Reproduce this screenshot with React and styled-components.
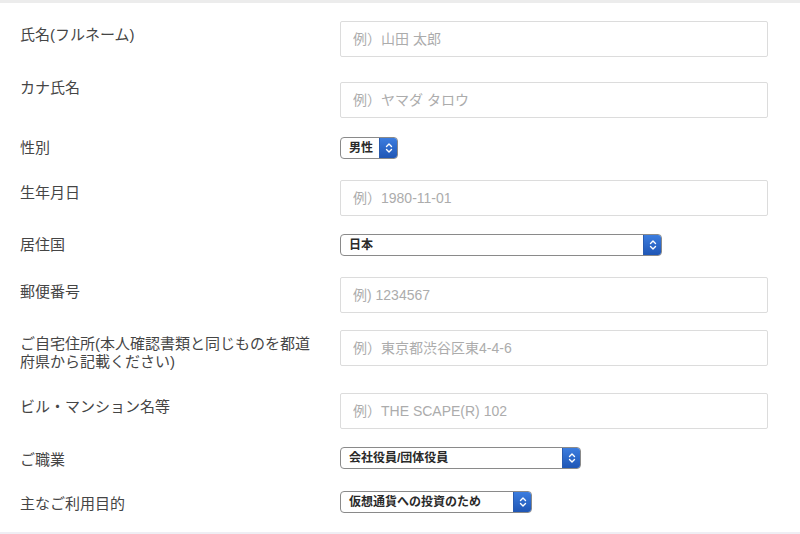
import React from "react";
import styled, { createGlobalStyle } from "styled-components";

const GlobalStyle = createGlobalStyle`
  html, body {
    margin: 0;
    padding: 0;
    background: #ffffff;
  }
  body {
    font-family: "Liberation Sans", "Noto Sans CJK JP", sans-serif;
    color: #333;
  }
`;

const Page = styled.div`
  width: 800px;
  height: 534px;
  box-sizing: border-box;
  border-top: 3px solid #ececec;
  border-bottom: 2px solid #efeef4;
  background: #fff;
  overflow: hidden;
`;

const Form = styled.form`
  display: flex;
  flex-direction: column;
  margin: 0;
`;

const Row = styled.div`
  display: grid;
  grid-template-columns: 340px 428px;
  align-items: start;
  margin-top: ${(p) => p.$top}px;
`;

const Label = styled.label`
  box-sizing: border-box;
  padding-left: 20px;
  margin-top: ${(p) => p.$shift}px;
  font-size: 15px;
  line-height: 18px;
  color: #454545;
  width: 322px;
`;

const TextInput = styled.input`
  box-sizing: border-box;
  width: 428px;
  height: 36px;
  margin: 0;
  padding: 0 12px;
  border: 1px solid #dcdcdc;
  border-radius: 2px;
  font-family: "Liberation Sans", "Noto Sans CJK JP", sans-serif;
  font-size: 14px;
  color: #333;
  outline: none;

  &::placeholder {
    color: #acacac;
  }
`;

const Select = styled.div`
  box-sizing: border-box;
  width: ${(p) => p.$width}px;
  height: 22px;
  display: flex;
  align-items: stretch;
  border: 1px solid #8a8a8a;
  border-radius: 4px;
  background: #fff;
  overflow: hidden;
`;

const SelectValue = styled.span`
  flex: 1;
  padding-left: 8px;
  font-size: 12px;
  line-height: 20px;
  font-weight: bold;
  color: #2a2a2a;
  white-space: nowrap;
`;

const Stepper = styled.span`
  width: 17px;
  display: flex;
  align-items: center;
  justify-content: center;
  background: linear-gradient(#3c7ddf, #1f56b5);
  border-left: 1px solid #2a5cb0;
`;

const Chevrons = () => (
  <svg width="8" height="12" viewBox="0 0 8 12" fill="none">
    <path d="M1.5 4.5 L4 2 L6.5 4.5" stroke="#fff" strokeWidth="1.4" strokeLinecap="round" strokeLinejoin="round" />
    <path d="M1.5 7.5 L4 10 L6.5 7.5" stroke="#fff" strokeWidth="1.4" strokeLinecap="round" strokeLinejoin="round" />
  </svg>
);

const SelectBox = ({ value, width }) => (
  <Select $width={width}>
    <SelectValue>{value}</SelectValue>
    <Stepper>
      <Chevrons />
    </Stepper>
  </Select>
);

const rows = [
  { label: "氏名(フルネーム)", top: 18, shift: 5, placeholder: "例）山田 太郎" },
  { label: "カナ氏名", top: 25, shift: -3, placeholder: "例）ヤマダ タロウ" },
  { label: "性別", top: 19, shift: 2, select: "男性", width: 58 },
  { label: "生年月日", top: 21, shift: 4, placeholder: "例）1980-11-01" },
  { label: "居住国", top: 18, shift: 2, select: "日本", width: 322 },
  { label: "郵便番号", top: 21, shift: 6, placeholder: "例) 1234567" },
  {
    label: "ご自宅住所(本人確認書類と同じものを都道府県から記載ください)",
    top: 17,
    shift: 5,
    placeholder: "例）東京都渋谷区東4-4-6",
  },
  { label: "ビル・マンション名等", top: 22, shift: 5, placeholder: "例）THE SCAPE(R) 102" },
  { label: "ご職業", top: 18, shift: 4, select: "会社役員/団体役員", width: 241 },
  { label: "主なご利用目的", top: 22, shift: 4, select: "仮想通貨への投資のため", width: 192 },
];

export default function App() {
  return (
    <>
      <GlobalStyle />
      <Page>
        <Form>
          {rows.map((r) => (
            <Row key={r.label} $top={r.top}>
              <Label $shift={r.shift}>{r.label}</Label>
              {r.select ? (
                <SelectBox value={r.select} width={r.width} />
              ) : (
                <TextInput placeholder={r.placeholder} />
              )}
            </Row>
          ))}
        </Form>
      </Page>
    </>
  );
}
